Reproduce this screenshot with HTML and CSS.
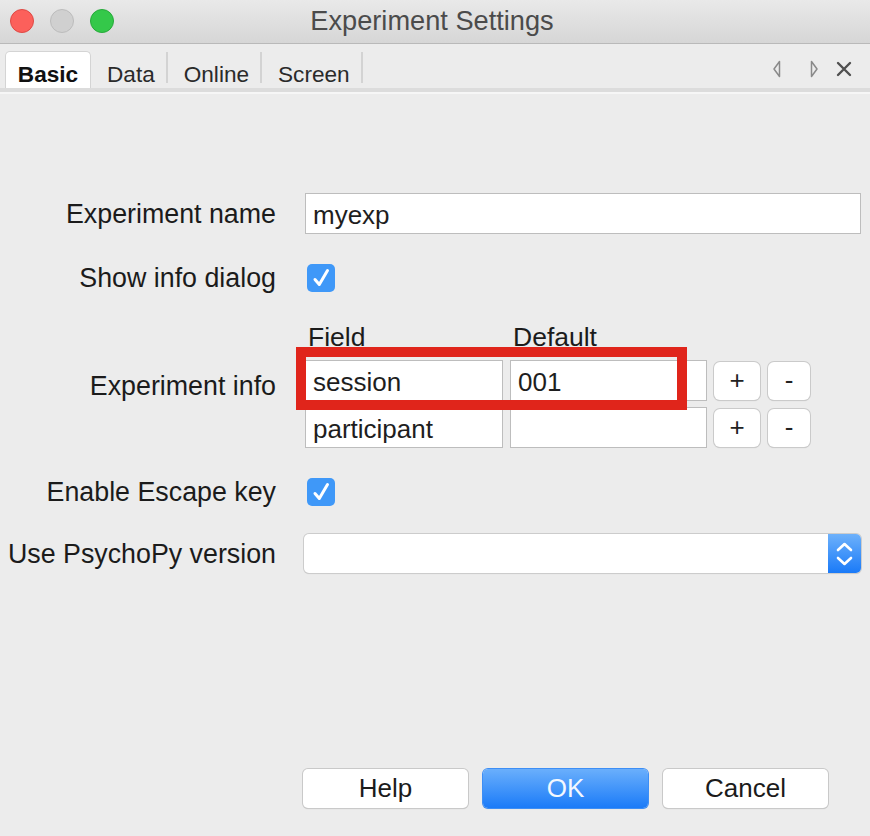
FILE: index.html
```html
<!DOCTYPE html>
<html lang="en">
<head>
<meta charset="utf-8">
<title>Experiment Settings</title>
<link rel="stylesheet" href="styles.css">
</head>
<body>
<div class="window">
  <header class="titlebar">
    <div class="lights">
      <span class="light red"></span>
      <span class="light gray"></span>
      <span class="light green"></span>
    </div>
    <div class="title">Experiment Settings</div>
    <div></div>
  </header>

  <nav class="tabs">
    <div class="tab active">Basic</div>
    <div class="tab">Data</div>
    <span class="sep"></span>
    <div class="tab">Online</div>
    <span class="sep"></span>
    <div class="tab">Screen</div>
    <span class="sep"></span>
    <div class="tab-tools">
      <svg class="tool" width="10" height="18" viewBox="0 0 10 18"><path d="M7.5 1.5 L2 9 L7.5 16.5 Z" fill="none" stroke="#8a8a8a" stroke-width="1.5" stroke-linejoin="round"/></svg>
      <svg class="tool" width="10" height="18" viewBox="0 0 10 18"><path d="M2.5 1.5 L8 9 L2.5 16.5 Z" fill="none" stroke="#8a8a8a" stroke-width="1.5" stroke-linejoin="round"/></svg>
      <svg class="tool close" width="16" height="16" viewBox="0 0 16 16"><path d="M2 2 L14 14 M14 2 L2 14" stroke="#505050" stroke-width="2.4" stroke-linecap="round"/></svg>
    </div>
  </nav>

  <main class="form">
    <div class="row r-name">
      <label class="label">Experiment name</label>
      <div class="input wide">myexp</div>
    </div>

    <div class="row r-info-dialog">
      <label class="label">Show info dialog</label>
      <div class="check">
        <svg width="28" height="28" viewBox="0 0 28 28"><path d="M8 15.5 L12.3 20.5 L20.5 6.5" fill="none" stroke="#fff" stroke-width="3" stroke-linecap="round" stroke-linejoin="round"/></svg>
      </div>
    </div>

    <div class="row r-info">
      <label class="label">Experiment info</label>
      <div class="info">
        <div class="info-head">Field</div>
        <div class="info-head">Default</div>
        <div></div>
        <div></div>

        <div class="input cell">session</div>
        <div class="input cell">001</div>
        <button class="small-btn plus">+</button>
        <button class="small-btn minus">-</button>

        <div class="input cell">participant</div>
        <div class="input cell"></div>
        <button class="small-btn plus">+</button>
        <button class="small-btn minus">-</button>

        <div class="highlight"></div>
      </div>
    </div>

    <div class="row r-escape">
      <label class="label">Enable Escape key</label>
      <div class="check">
        <svg width="28" height="28" viewBox="0 0 28 28"><path d="M8 15.5 L12.3 20.5 L20.5 6.5" fill="none" stroke="#fff" stroke-width="3" stroke-linecap="round" stroke-linejoin="round"/></svg>
      </div>
    </div>

    <div class="row r-version">
      <label class="label">Use PsychoPy version</label>
      <div class="select">
        <div class="select-value"></div>
        <div class="stepper">
          <svg width="33" height="39" viewBox="0 0 33 39"><path d="M10 16 L16.5 10 L23 16" fill="none" stroke="#fff" stroke-width="2.6" stroke-linecap="round" stroke-linejoin="round"/><path d="M10 24 L16.5 30 L23 24" fill="none" stroke="#fff" stroke-width="2.6" stroke-linecap="round" stroke-linejoin="round"/></svg>
        </div>
      </div>
    </div>
  </main>

  <footer class="buttons">
    <button class="btn">Help</button>
    <button class="btn primary">OK</button>
    <button class="btn">Cancel</button>
  </footer>
</div>
</body>
</html>
```

FILE: styles.css
```css
* { box-sizing: border-box; }

html, body {
  margin: 0;
  padding: 0;
  background: #ececec;
}

body {
  font-family: "Liberation Sans", Arial, "Helvetica Neue", sans-serif;
  color: #1b1b1b;
}

.window {
  width: 870px;
  height: 836px;
  display: flex;
  flex-direction: column;
  background: #ececec;
  overflow: hidden;
}

/* Title bar */
.titlebar {
  height: 44px;
  display: grid;
  grid-template-columns: 1fr auto 1fr;
  align-items: center;
  background: linear-gradient(#e9e9e9, #d6d6d6);
  border-bottom: 1px solid #b9b9b9;
}

.lights {
  display: flex;
  gap: 16px;
  padding-left: 10px;
  margin-top: -1px;
}

.light {
  width: 24px;
  height: 24px;
  border-radius: 50%;
  display: block;
}
.light.red { background: #fc605b; border: 1px solid #de4944; }
.light.gray { background: #d0d0d0; border: 1px solid #bcbcbc; }
.light.green { background: #34c84a; border: 1px solid #27a93a; }

.title {
  font-size: 27.2px;
  color: #4b4b4b;
  margin-left: -6px;
  margin-top: -1px;
}

/* Tabs */
.tabs {
  height: 48px;
  display: flex;
  align-items: flex-end;
  padding-left: 5px;
  border-bottom: 4px solid #dcdcdc;
  box-shadow: 0 2px 0 #f6f6f6;
  background: #ececec;
}

.tab {
  height: 37px;
  padding: 11px 11px 0 16px;
  font-size: 22.6px;
  line-height: 26px;
  color: #2a2a2a;
}

.tab.active {
  width: 86px;
  padding: 10px 0 0 0;
  text-align: center;
  font-weight: bold;
  color: #111;
  background: #fff;
  border: 1px solid #d4d4d4;
  border-bottom: none;
  border-radius: 5px 5px 0 0;
}

.sep {
  width: 2px;
  height: 31px;
  margin-bottom: 5px;
  background: #d3d3d3;
}

.tab-tools {
  margin-left: auto;
  margin-right: 18px;
  align-self: stretch;
  display: flex;
  align-items: center;
  padding-top: 6px;
}

.tool { display: block; }
.tool + .tool { margin-left: 27px; }
.tool.close { margin-left: 17px; }

/* Form */
.form {
  padding-top: 101px;
  padding-right: 9px;
}

.row {
  display: grid;
  grid-template-columns: 276px 1fr;
  column-gap: 29px;
  align-items: center;
}

.label {
  text-align: right;
  font-size: 26.8px;
  line-height: 28px;
  color: #1b1b1b;
  white-space: nowrap;
}

.r-info-dialog { margin-top: 30px; }
.r-info { margin-top: 32px; }
.r-escape { margin-top: 30px; }
.r-version { margin-top: 28px; }

.input {
  height: 41px;
  background: #fff;
  border: 1px solid #bdbdbd;
  font-size: 26px;
  line-height: 39px;
  padding: 2px 0 0 7px;
  color: #1e1e1e;
  white-space: nowrap;
  overflow: hidden;
}

.check {
  width: 28px;
  height: 28px;
  margin-left: 2px;
  border-radius: 5px;
  background: #3f98f8;
}
.check svg { display: block; }

/* Experiment info table */
.info {
  position: relative;
  display: grid;
  grid-template-columns: 198px 197px 46px 42px;
  grid-template-rows: 30px 41px 41px;
  column-gap: 7px;
  row-gap: 6px;
  align-items: center;
  justify-content: start;
}

.info-head {
  font-size: 26.5px;
  line-height: 30px;
  padding-left: 3px;
  color: #1b1b1b;
  align-self: start;
  margin-top: -2px;
}

.small-btn {
  height: 38px;
  background: #fff;
  border: none;
  border-radius: 6px;
  box-shadow: 0 0 0 1px #cacaca, 0 1px 1px 0 rgba(0,0,0,0.18);
  font-family: inherit;
  font-size: 26px;
  color: #222;
  padding: 0;
}
.small-btn.minus { margin-left: 1px; width: 42px; }

.highlight {
  position: absolute;
  left: -9px;
  top: 23px;
  width: 391px;
  height: 63px;
  border: 10px solid #e0251b;
  pointer-events: none;
}

/* Select */
.select {
  height: 39px;
  display: flex;
  margin-left: -1px;
  background: #fff;
  border-radius: 5px;
  box-shadow: 0 0 0 1px #cccccc, 0 1px 1px 0 rgba(0,0,0,0.15);
}
.select-value { flex: 1; }
.stepper {
  width: 33px;
  border-radius: 0 5px 5px 0;
  background: linear-gradient(#6db1fb, #1a7af8);
}
.stepper svg { display: block; }

/* Footer buttons */
.buttons {
  margin-top: auto;
  display: flex;
  gap: 15px;
  padding: 0 0 28px 303px;
}

.btn {
  width: 165px;
  height: 39px;
  border: none;
  border-radius: 5px;
  background: #fff;
  box-shadow: 0 0 0 1px #c9c9c9, 0 1px 1px 0 rgba(0,0,0,0.2);
  font-family: inherit;
  font-size: 26px;
  color: #1b1b1b;
  padding: 0;
}

.btn.primary {
  background: linear-gradient(#6aaffc, #1b7bf8);
  box-shadow: 0 0 0 1px #3d8ef5, 0 1px 1px 0 rgba(0,0,0,0.15);
  color: #f3f8ff;
}
```
